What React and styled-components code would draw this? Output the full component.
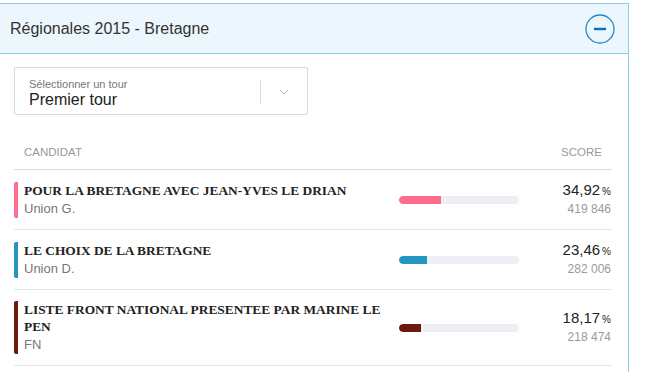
import React from "react";
import styled, { createGlobalStyle } from "styled-components";

const GlobalStyle = createGlobalStyle`
  body {
    margin: 3px 0 0 0;
    background: #fff;
    font-family: "Liberation Sans", Arial, sans-serif;
  }
`;

const candidates = [
  { name: "POUR LA BRETAGNE AVEC JEAN-YVES LE DRIAN", party: "Union G.", pct: "34,92", pctValue: 34.92, votes: "419 846", color: "#ff6d8c" },
  { name: "LE CHOIX DE LA BRETAGNE", party: "Union D.", pct: "23,46", pctValue: 23.46, votes: "282 006", color: "#2396c3" },
  { name: "LISTE FRONT NATIONAL PRESENTEE PAR MARINE LE PEN", party: "FN", pct: "18,17", pctValue: 18.17, votes: "218 474", color: "#6b1a0b" },
];

const Panel = styled.section`
  width: 628px;
  min-height: 369px;
  border-top: 1px solid #8ecdf0;
  border-right: 1px solid #8ecdf0;
`;

const Header = styled.header`
  height: 49px;
  display: flex;
  align-items: center;
  justify-content: space-between;
  padding: 0 13px 0 10px;
  background: #ebf7fd;
  border-bottom: 1px solid #8ecdf0;
`;

const Title = styled.h2`
  margin: 0;
  font-size: 16px;
  font-weight: normal;
  color: #333;
`;

const ToggleButton = styled.button`
  width: 30px;
  height: 30px;
  padding: 0;
  border: none;
  background: transparent;
  display: flex;
  align-items: center;
  justify-content: center;
`;

const Body = styled.div`
  padding: 13px 16px 0 14px;
`;

const Select = styled.div`
  width: 292px;
  height: 46px;
  border: 1px solid #d9d9de;
  border-radius: 2px;
  display: flex;
  align-items: center;
`;

const SelectText = styled.div`
  flex: 1;
  padding: 4px 0 0 14px;
  display: flex;
  flex-direction: column;
`;

const SelectLabel = styled.span`
  font-size: 11px;
  color: #777;
  line-height: 14px;
`;

const SelectValue = styled.span`
  font-size: 16px;
  color: #222;
  line-height: 18px;
`;

const SelectArrow = styled.div`
  width: 46px;
  height: 24px;
  margin-top: 2px;
  border-left: 1px solid #dcdcdc;
  display: flex;
  align-items: center;
  justify-content: center;
`;

const Table = styled.div`
  margin-top: 21px;
  width: 598px;
`;

const HeadRow = styled.div`
  display: flex;
  justify-content: space-between;
  padding: 9px 10px 10px 10px;
  border-bottom: 1px solid #dcdcdc;
  font-size: 11.5px;
  line-height: 14px;
  color: #999;
  text-transform: uppercase;
`;

const Row = styled.div`
  display: grid;
  grid-template-columns: 1fr 120px 93px;
  align-items: center;
  padding: 11px 0 11px 0;
  border-bottom: 1px solid #e6e6e6;
`;

const NameCell = styled.div`
  margin-right: 12px;
  border-left: 4px solid ${(p) => p.$color};
  border-radius: 2px;
  padding-left: 6px;
`;

const Name = styled.div`
  font-family: "Liberation Serif", "Times New Roman", serif;
  font-weight: bold;
  font-size: 13.4px;
  line-height: 17px;
  color: #222;
`;

const Party = styled.div`
  font-size: 13px;
  line-height: 19px;
  color: #777;
`;

const Track = styled.div`
  height: 8px;
  border-radius: 4px;
  background: #eeeff4;
  overflow: hidden;
`;

const Fill = styled.div`
  height: 100%;
  border-radius: 4px 0 0 4px;
  background: ${(p) => p.$color};
`;

const ScoreCell = styled.div`
  text-align: right;
  padding-right: 1px;
`;

const Pct = styled.div`
  font-size: 15px;
  line-height: 18px;
  color: #222;
`;

const PctSign = styled.span`
  font-size: 10px;
  margin-left: 2px;
`;

const Votes = styled.div`
  font-size: 12px;
  line-height: 17px;
  color: #999;
`;

export default function App() {
  return (
    <>
      <GlobalStyle />
      <Panel>
        <Header>
          <Title>Régionales 2015 - Bretagne</Title>
          <ToggleButton aria-label="Réduire">
            <svg width="30" height="30" viewBox="0 0 30 30">
              <circle cx="15" cy="15" r="14" fill="none" stroke="#2a86c6" strokeWidth="1.3" />
              <line x1="9" y1="15" x2="21" y2="15" stroke="#0e6db6" strokeWidth="2.4" />
            </svg>
          </ToggleButton>
        </Header>
        <Body>
          <Select>
            <SelectText>
              <SelectLabel>Sélectionner un tour</SelectLabel>
              <SelectValue>Premier tour</SelectValue>
            </SelectText>
            <SelectArrow>
              <svg width="10" height="6" viewBox="0 0 10 6">
                <polyline points="1,1 5,5 9,1" fill="none" stroke="#bbb" strokeWidth="1" />
              </svg>
            </SelectArrow>
          </Select>
          <Table>
            <HeadRow>
              <span>Candidat</span>
              <span>Score</span>
            </HeadRow>
            {candidates.map((c) => (
              <Row key={c.name}>
                <NameCell $color={c.color}>
                  <Name>{c.name}</Name>
                  <Party>{c.party}</Party>
                </NameCell>
                <Track>
                  <Fill $color={c.color} style={{ width: `${c.pctValue}%` }} />
                </Track>
                <ScoreCell>
                  <Pct>
                    {c.pct}
                    <PctSign>%</PctSign>
                  </Pct>
                  <Votes>{c.votes}</Votes>
                </ScoreCell>
              </Row>
            ))}
          </Table>
        </Body>
      </Panel>
    </>
  );
}
